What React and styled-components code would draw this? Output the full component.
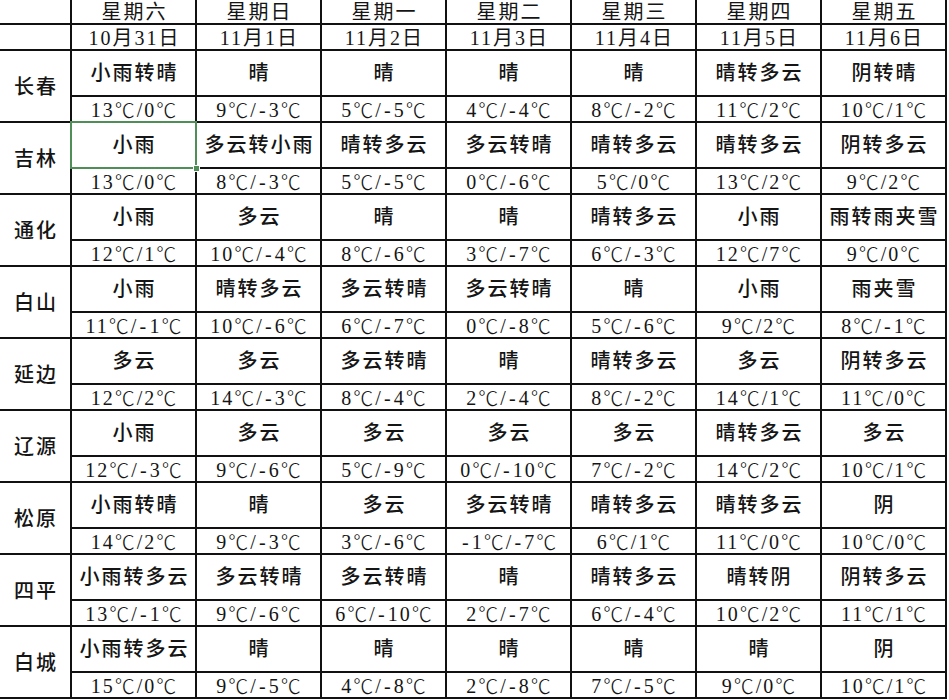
import React from "react";
import styled, { createGlobalStyle } from "styled-components";

const GlobalStyle = createGlobalStyle`
  html, body {
    margin: 0;
    padding: 0;
    background: #fff;
  }
`;

const days = [
  ["星期六", "10月31日"],
  ["星期日", "11月1日"],
  ["星期一", "11月2日"],
  ["星期二", "11月3日"],
  ["星期三", "11月4日"],
  ["星期四", "11月5日"],
  ["星期五", "11月6日"],
];

const cities = [
  ["长春", ["小雨转晴", "晴", "晴", "晴", "晴", "晴转多云", "阴转晴"],
    ["13℃/0℃", "9℃/-3℃", "5℃/-5℃", "4℃/-4℃", "8℃/-2℃", "11℃/2℃", "10℃/1℃"]],
  ["吉林", ["小雨", "多云转小雨", "晴转多云", "多云转晴", "晴转多云", "晴转多云", "阴转多云"],
    ["13℃/0℃", "8℃/-3℃", "5℃/-5℃", "0℃/-6℃", "5℃/0℃", "13℃/2℃", "9℃/2℃"]],
  ["通化", ["小雨", "多云", "晴", "晴", "晴转多云", "小雨", "雨转雨夹雪"],
    ["12℃/1℃", "10℃/-4℃", "8℃/-6℃", "3℃/-7℃", "6℃/-3℃", "12℃/7℃", "9℃/0℃"]],
  ["白山", ["小雨", "晴转多云", "多云转晴", "多云转晴", "晴", "小雨", "雨夹雪"],
    ["11℃/-1℃", "10℃/-6℃", "6℃/-7℃", "0℃/-8℃", "5℃/-6℃", "9℃/2℃", "8℃/-1℃"]],
  ["延边", ["多云", "多云", "多云转晴", "晴", "晴转多云", "多云", "阴转多云"],
    ["12℃/2℃", "14℃/-3℃", "8℃/-4℃", "2℃/-4℃", "8℃/-2℃", "14℃/1℃", "11℃/0℃"]],
  ["辽源", ["小雨", "多云", "多云", "多云", "多云", "晴转多云", "多云"],
    ["12℃/-3℃", "9℃/-6℃", "5℃/-9℃", "0℃/-10℃", "7℃/-2℃", "14℃/2℃", "10℃/1℃"]],
  ["松原", ["小雨转晴", "晴", "多云", "多云转晴", "晴转多云", "晴转多云", "阴"],
    ["14℃/2℃", "9℃/-3℃", "3℃/-6℃", "-1℃/-7℃", "6℃/1℃", "11℃/0℃", "10℃/0℃"]],
  ["四平", ["小雨转多云", "多云转晴", "多云转晴", "晴", "晴转多云", "晴转阴", "阴转多云"],
    ["13℃/-1℃", "9℃/-6℃", "6℃/-10℃", "2℃/-7℃", "6℃/-4℃", "10℃/2℃", "11℃/1℃"]],
  ["白城", ["小雨转多云", "晴", "晴", "晴", "晴", "晴", "阴"],
    ["15℃/0℃", "9℃/-5℃", "4℃/-8℃", "2℃/-8℃", "7℃/-5℃", "9℃/0℃", "10℃/1℃"]],
];

const Sheet = styled.div`
  display: grid;
  grid-template-columns: 70px repeat(7, 123px);
  grid-template-rows: 23px 24px repeat(9, 44px 24px);
  gap: 2px;
  width: max-content;
  padding: 0 2px 2px 0;
  background: #111;
  font-family: "Liberation Serif", "Noto Sans CJK SC", serif;
  font-size: 20px;
  color: #151515;
`;

const Cell = styled.div`
  position: relative;
  background: #fff;
  display: flex;
  align-items: center;
  justify-content: center;
  letter-spacing: 2px;
  line-height: 1;
  white-space: nowrap;
  padding-left: 2px;
  font-weight: ${(p) => (p.$bold ? 500 : 400)};
  ${(p) => p.$tight && "padding-top: 2px;"}
  ${(p) =>
    p.$selected &&
    `
    z-index: 1;
    &::after {
      content: "";
      position: absolute;
      inset: -2px;
      border: 2px solid #4f8f57;
      pointer-events: none;
    }
  `}
`;

const CityCell = styled(Cell)`
  grid-row: span 2;
  padding-top: 2px;
  font-weight: 500;
`;

const Unit = styled.span`
  font-family: "Noto Sans CJK SC", sans-serif;
  font-weight: 300;
`;

const Dash = styled.span`
  display: inline-block;
  width: 11px;
  text-align: center;
`;

const Handle = styled.span`
  position: absolute;
  right: -5px;
  bottom: -5px;
  width: 5px;
  height: 5px;
  background: #4f8f57;
  border: 1px solid #fff;
  z-index: 2;
`;

// split "9℃/-3℃" so the degree sign and minus get their wide glyphs
const Temp = ({ text }) =>
  text.split(/(℃|-)/).map((part, i) => {
    if (part === "℃") return <Unit key={i}>℃</Unit>;
    if (part === "-") return <Dash key={i}>-</Dash>;
    return part;
  });

const App = () => {
  return (
    <>
      <GlobalStyle />
      <Sheet>
        <Cell />
        {days.map(([d]) => (
          <Cell key={d}>{d}</Cell>
        ))}
        <Cell />
        {days.map(([d, date]) => (
          <Cell key={date} $tight>
            {date}
          </Cell>
        ))}
        {cities.map(([name, weather, temps], ci) => (
          <React.Fragment key={name}>
            <CityCell>{name}</CityCell>
            {weather.map((w, i) => (
              <Cell key={"w" + i} $bold $selected={ci === 1 && i === 0}>
                {w}
                {ci === 1 && i === 0 && <Handle />}
              </Cell>
            ))}
            {temps.map((t, i) => (
              <Cell key={"t" + i} $tight>
                <Temp text={t} />
              </Cell>
            ))}
          </React.Fragment>
        ))}
      </Sheet>
    </>
  );
};

export default App;
